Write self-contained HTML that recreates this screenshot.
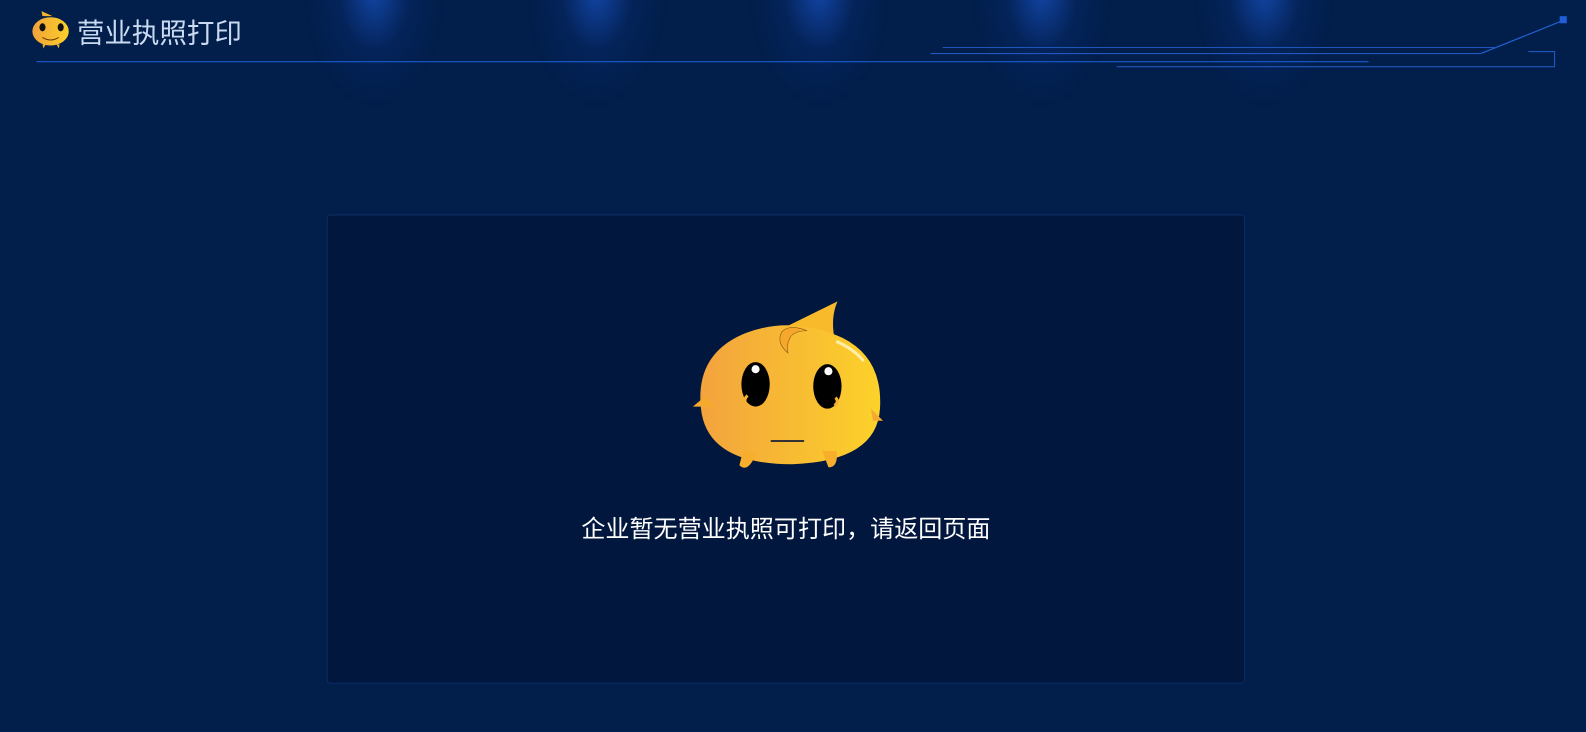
<!DOCTYPE html>
<html><head><meta charset="utf-8"><style>
html,body{margin:0;padding:0}
body{width:1586px;height:732px;overflow:hidden;position:relative;background:#021e4a;font-family:"Liberation Sans","Noto Sans CJK SC",sans-serif}
#w{position:absolute;left:0;top:0;width:1568px;height:724px;transform:scale(1.01148);transform-origin:0 0}
.spot{position:absolute;top:-30px;width:140px;height:190px;background:radial-gradient(ellipse 50% 60% at 50% 12%,rgba(25,85,200,.7),rgba(10,50,130,.28) 50%,rgba(2,30,74,0) 100%)}
.title{position:absolute;left:76px;top:10px;font-size:27.2px;color:#c9daf2;letter-spacing:0}
.panel{position:absolute;left:323px;top:212px;width:906px;height:462px;background:#02173e;border:1px solid #0b2d66;border-radius:4px}
.msg{position:absolute;left:0;width:1554px;top:503px;text-align:center;font-size:23.8px;color:#fff}
</style></head><body><div id="w">
<div class="spot" style="left:300px"></div>
<div class="spot" style="left:520px"></div>
<div class="spot" style="left:740px"></div>
<div class="spot" style="left:960px"></div>
<div class="spot" style="left:1180px"></div>
<svg width="1568" height="80" style="position:absolute;left:0;top:0">
<line x1="36" y1="61" x2="1353" y2="61" stroke="#1a5bd0" stroke-width="1.2"/>
<line x1="932" y1="47" x2="1478" y2="47" stroke="#1e55b8" stroke-width="1"/>
<line x1="920" y1="53" x2="1464" y2="53" stroke="#2060d0" stroke-width="1"/>
<line x1="1464" y1="53" x2="1546" y2="20" stroke="#2060d0" stroke-width="1.2"/>
<rect x="1542" y="16" width="7" height="7" fill="#1f5fd8"/>
<line x1="1104" y1="66" x2="1537" y2="66" stroke="#2060d0" stroke-width="1"/>
<polyline points="1511,51 1537,51 1537,66" fill="none" stroke="#2060d0" stroke-width="1"/>
</svg>
<svg width="42" height="40" viewBox="0 0 42 40" style="position:absolute;left:30px;top:10px">
<defs><linearGradient id="g1" x1="0" x2="1"><stop offset="0" stop-color="#f2a33a"/><stop offset="1" stop-color="#fbd02a"/></linearGradient></defs>
<path d="M12 6 L11 1 L22 6 Z" fill="#f7b52c"/>
<ellipse cx="20" cy="21" rx="18" ry="14" fill="url(#g1)"/>
<ellipse cx="12" cy="17" rx="3" ry="4" fill="#111"/><ellipse cx="30" cy="17" rx="3" ry="4" fill="#111"/>
<path d="M12 27 Q20 32 28 27" stroke="#6a3b00" fill="none" stroke-width="1"/>
<path d="M12 34 L13 38 L15 34Z M26 34 L28 38 L29 34Z" fill="#f5b02a"/>
</svg>
<div class="title">营业执照打印</div>
<div class="panel"></div>
<svg width="200" height="180" viewBox="0 0 200 180" style="position:absolute;left:683px;top:294px">
<defs><linearGradient id="g2" x1="0" x2="1"><stop offset="0" stop-color="#f3a33d"/><stop offset="1" stop-color="#fcd22a"/></linearGradient></defs>
<path d="M88 32 L145 4 Q138 20 142 40 Z" fill="#f8b92a"/>
<path d="M10 110 Q4 55 55 35 Q100 18 150 40 Q190 60 187 110 Q184 162 100 165 Q16 165 10 110 Z" fill="url(#g2)"/>
<path d="M52 150 L48 166 Q56 174 64 156Z M130 152 L136 168 Q146 168 144 152Z" fill="#f6ae2c"/>
<path d="M14 98 L2 108 L24 108Z M178 110 L190 122 L180 122Z" fill="#f5aa2e"/>
<path d="M145 44 Q162 52 170 62" stroke="#fff6c8" stroke-width="3" fill="none" stroke-linecap="round" opacity=".8"/>
<ellipse cx="64" cy="86" rx="14" ry="22" fill="#000"/>
<ellipse cx="135" cy="88" rx="14" ry="22" fill="#000"/>
<circle cx="64" cy="71" r="4" fill="#fff"/><circle cx="136" cy="73" r="4" fill="#fff"/>
<path d="M56 97 Q52 101 54 105" stroke="#f5b030" stroke-width="3" fill="none"/>
<path d="M143 99 Q147 103 142 107" stroke="#f5b030" stroke-width="3" fill="none"/>
<line x1="79" y1="142" x2="112" y2="142" stroke="#333" stroke-width="2"/>
<path d="M96 55 Q84 45 90 34 Q98 26 115 33 Q102 33 98 40 Q94 48 96 55Z" fill="#f5a82c" stroke="#8a5a10" stroke-width=".6"/>
</svg>
<div class="msg">企业暂无营业执照可打印，请返回页面</div>
</div></body></html>
